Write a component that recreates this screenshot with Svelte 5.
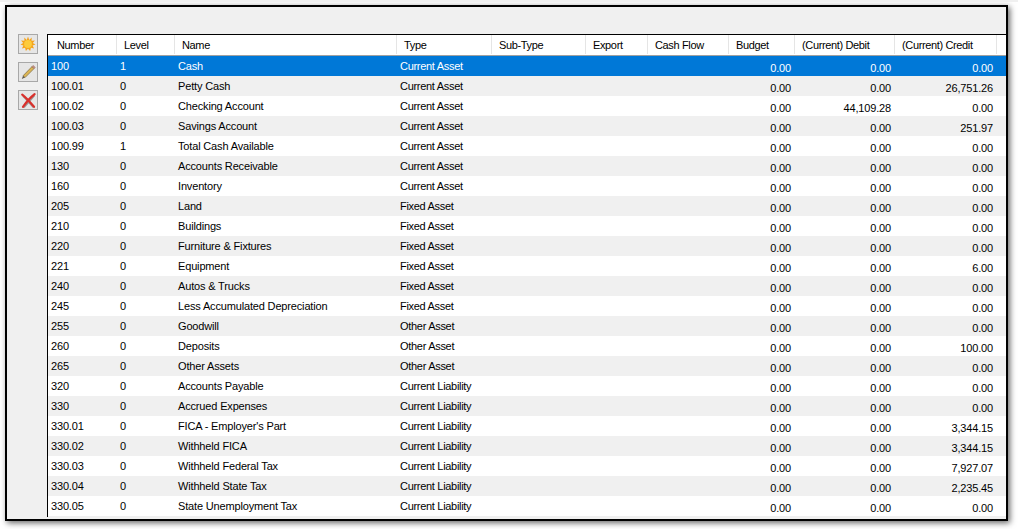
<script lang="ts">
  const columns = ['Number', 'Level', 'Name', 'Type', 'Sub-Type', 'Export', 'Cash Flow', 'Budget', '(Current) Debit', '(Current) Credit'];

  const CA = 'Current Asset';
  const FA = 'Fixed Asset';
  const OA = 'Other Asset';
  const CL = 'Current Liability';

  const rows = [
    ['100', '1', 'Cash', CA, '0.00', '0.00', '0.00'],
    ['100.01', '0', 'Petty Cash', CA, '0.00', '0.00', '26,751.26'],
    ['100.02', '0', 'Checking Account', CA, '0.00', '44,109.28', '0.00'],
    ['100.03', '0', 'Savings Account', CA, '0.00', '0.00', '251.97'],
    ['100.99', '1', 'Total Cash Available', CA, '0.00', '0.00', '0.00'],
    ['130', '0', 'Accounts Receivable', CA, '0.00', '0.00', '0.00'],
    ['160', '0', 'Inventory', CA, '0.00', '0.00', '0.00'],
    ['205', '0', 'Land', FA, '0.00', '0.00', '0.00'],
    ['210', '0', 'Buildings', FA, '0.00', '0.00', '0.00'],
    ['220', '0', 'Furniture & Fixtures', FA, '0.00', '0.00', '0.00'],
    ['221', '0', 'Equipment', FA, '0.00', '0.00', '6.00'],
    ['240', '0', 'Autos & Trucks', FA, '0.00', '0.00', '0.00'],
    ['245', '0', 'Less Accumulated Depreciation', FA, '0.00', '0.00', '0.00'],
    ['255', '0', 'Goodwill', OA, '0.00', '0.00', '0.00'],
    ['260', '0', 'Deposits', OA, '0.00', '0.00', '100.00'],
    ['265', '0', 'Other Assets', OA, '0.00', '0.00', '0.00'],
    ['320', '0', 'Accounts Payable', CL, '0.00', '0.00', '0.00'],
    ['330', '0', 'Accrued Expenses', CL, '0.00', '0.00', '0.00'],
    ['330.01', '0', "FICA - Employer's Part", CL, '0.00', '0.00', '3,344.15'],
    ['330.02', '0', 'Withheld FICA', CL, '0.00', '0.00', '3,344.15'],
    ['330.03', '0', 'Withheld Federal Tax', CL, '0.00', '0.00', '7,927.07'],
    ['330.04', '0', 'Withheld State Tax', CL, '0.00', '0.00', '2,235.45'],
    ['330.05', '0', 'State Unemployment Tax', CL, '0.00', '0.00', '0.00'],
  ];
</script>

<div class="page">
  <div class="window">
    <div class="toolbar">
      <button class="tool" aria-label="New">
        <svg width="16" height="16" viewBox="0 0 18 18">
          <path d="M9 0.5 10.4 4.4 13.2 1.8 13 5.4 16.8 5 14.4 7.8 17.5 9.5 14.2 10.8 15.8 14.2 12.3 13.3 11.4 17 9 14.3 6.6 17 5.7 13.3 2.2 14.2 3.8 10.8 0.5 9.5 3.6 7.8 1.2 5 5 5.4 4.8 1.8 7.6 4.4Z" fill="#f5a41c" />
          <circle cx="9" cy="9" r="4.4" fill="#fdcb3c" />
        </svg>
      </button>
      <button class="tool" aria-label="Edit">
        <svg width="18" height="18" viewBox="0 0 18 18">
          <path d="M4 12.8 13 3.6 15 5.6 6 14.6Z" fill="#dcb552" stroke="#85744a" stroke-width=".8" />
          <path d="M4 12.8 2.8 16 6 14.6Z" fill="#5f5a50" />
          <path d="M13 3.6 14.2 2.4 16.2 4.4 15 5.6Z" fill="#c98a80" stroke="#8d6a5a" stroke-width=".5" />
        </svg>
      </button>
      <button class="tool" aria-label="Delete">
        <svg width="18" height="18" viewBox="0 0 18 18">
          <path d="M4 5 14.5 16.5M15.5 4.5 5 16.5" stroke="#9a9a9a" stroke-width="1.6" fill="none" />
          <path d="M3.2 3.6C7 6.4 11 11 15 15.8M15.6 3.2C11.4 6.4 7.4 11 4 15.8" stroke="#d8302c" stroke-width="2.2" stroke-linecap="round" fill="none" />
        </svg>
      </button>
    </div>

    <div class="grid">
      <div class="row head">
        {#each columns as col}
          <div class="hcell">{col}</div>
        {/each}
        <div class="hcell filler"></div>
      </div>
      {#each rows as r, i}
        <div class="row" class:alt={i % 2 === 1} class:selected={i === 0}>
          <div class="cell">{r[0]}</div>
          <div class="cell">{r[1]}</div>
          <div class="cell">{r[2]}</div>
          <div class="cell type">{r[3]}</div>
          <div class="cell"></div>
          <div class="cell"></div>
          <div class="cell"></div>
          <div class="cell num">{r[4]}</div>
          <div class="cell num">{r[5]}</div>
          <div class="cell num">{r[6]}</div>
        </div>
      {/each}
    </div>
  </div>
</div>

<style>
  :global(body) {
    margin: 0;
    background: #fff;
  }

  .page {
    height: 529px;
    box-sizing: border-box;
    border-top: 2px solid #f0f0f0;
    padding: 3px 10px 8px 5px;
    overflow: hidden;
    font-family: "Liberation Sans", Arial, sans-serif;
    font-size: 11px;
    letter-spacing: -0.16px;
    color: #000;
  }

  .window {
    height: 516px;
    box-sizing: border-box;
    display: flex;
    align-items: flex-start;
    border: 2px solid #000;
    background: #f0f0f0;
    box-shadow: 2px 2px 6px rgba(0, 0, 0, 0.6);
    padding-top: 27px;
    overflow: hidden;
  }

  .toolbar {
    display: flex;
    flex-direction: column;
    gap: 8px;
    width: 40px;
    flex: none;
    padding-left: 11px;
    box-sizing: border-box;
  }

  .tool {
    width: 20px;
    height: 20px;
    padding: 0;
    display: flex;
    align-items: center;
    justify-content: center;
    background: #e6e6e6;
    border: 1px solid #a8a8a8;
  }

  .grid {
    flex: 1;
    height: 482px;
    border-top: 1px solid #000;
    border-left: 1px solid #000;
    background: #f0f0f0;
    overflow: hidden;
  }

  .row {
    display: grid;
    grid-template-columns: 69px 58px 222px 95px 94px 62px 81px 66px 100px 102px 1fr;
    height: 20px;
    background: #fff;
    white-space: nowrap;
  }

  .row.alt {
    background: #f0f0f0;
  }

  .row.selected {
    background: #0078d7;
    color: #fff;
  }

  .row.head {
    background: #fff;
    border-bottom: 1px solid #a0a0a0;
  }

  .hcell {
    padding: 1px 0 0 7px;
    line-height: 19px;
    height: 19px;
    letter-spacing: -0.36px;
    border-right: 1px solid #e5e5e5;
    box-sizing: border-box;
    overflow: hidden;
  }

  .hcell:first-child {
    padding-left: 9px;
  }

  .hcell.filler {
    border-right: none;
  }

  .cell {
    padding: 1px 0 0 3px;
    line-height: 19px;
    overflow: hidden;
  }

  .cell.type {
    letter-spacing: -0.3px;
  }

  .cell.num {
    text-align: right;
    padding: 2px 4px 0 0;
    line-height: 20px;
  }
</style>
